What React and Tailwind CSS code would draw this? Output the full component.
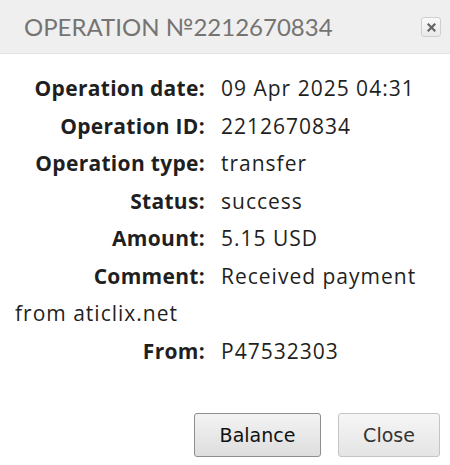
import React from "react";

const rows = [
  ["Operation date:", "09 Apr 2025 04:31"],
  ["Operation ID:", "2212670834"],
  ["Operation type:", "transfer"],
  ["Status:", "success"],
  ["Amount:", "5.15 USD"],
  ["Comment:", "Received payment from aticlix.net"],
  ["From:", "P47532303"],
];

const App = () => {
  return (
    <div className="w-[450px] h-[465px] bg-white overflow-hidden">
      {/* Header */}
      <div className="h-[54px] bg-[#efefef] border-b border-[#e2e2e2] flex items-center justify-between pl-6 pr-[9px]">
        <h1 className="text-[24px] text-[#767472] font-['Lato',sans-serif] leading-none mt-[1px]">
          OPERATION №2212670834
        </h1>
        <button className="w-5 h-5 rounded-[3px] border border-[#cfcfcf] bg-gradient-to-b from-[#fafafa] to-[#e9e9e9] flex items-center justify-center mt-[1px]">
          <svg width="9" height="9" viewBox="0 0 9 9">
            <path d="M1.5 1.5L7.5 7.5M7.5 1.5L1.5 7.5" stroke="#666" strokeWidth="2.2" strokeLinecap="square" />
          </svg>
        </button>
      </div>

      {/* Details */}
      <div className="pt-4 pl-[15px] pr-3 text-[21px] leading-[37.5px] tracking-[1px] text-[#1f1f22] font-['Open_Sans',sans-serif]">
        {rows.map(([label, value]) => (
          <div key={label}>
            <span className="inline-block w-[190px] mr-4 text-right font-bold tracking-[0.3px]">{label}</span>
            {value}
          </div>
        ))}
      </div>

      {/* Actions */}
      <div className="flex justify-end gap-[17px] pr-[10px] mt-[43px] font-['DejaVu_Sans',sans-serif] text-[19px]">
        <button className="w-[127px] h-[44px] rounded-[3px] border border-[#8e8e8e] bg-gradient-to-b from-[#f3f3f3] to-[#dedede] text-[#111]">
          Balance
        </button>
        <button className="w-[102px] h-[44px] rounded-[3px] border border-[#c4c4c4] bg-gradient-to-b from-[#f6f6f6] to-[#e4e4e4] text-[#333]">
          Close
        </button>
      </div>
    </div>
  );
};

export default App;
